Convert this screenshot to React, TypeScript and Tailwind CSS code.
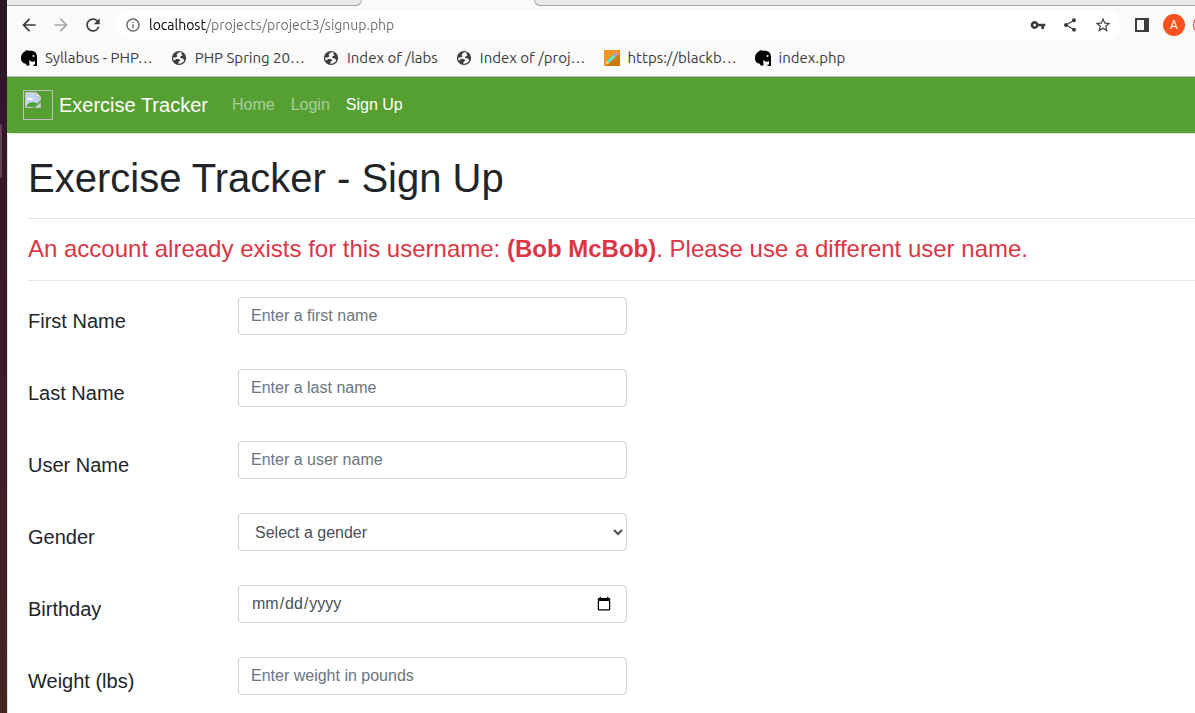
import React from "react";
import {
  MdArrowBack,
  MdArrowForward,
  MdInfoOutline,
  MdRefresh,
  MdShare,
  MdStarBorder,
  MdVpnKey,
} from "react-icons/md";

function ElephantIcon() {
  return (
    <svg viewBox="0 0 16 16" className="size-4 shrink-0" aria-hidden="true">
      <path
        d="M4 1.200C5 .3 6 0 7.200.6 8 .9 8.500.8 9.500.8 13.500.8 16 2.800 16 6.800V16h-3.500v-1.500H14V11c-1 1.200-3.800 1.200-5-.8l-.8.300L8.500 15.500H5.500L5 13.800C1.500 13.500 0 11 0 8 0 4.800 1.500 2.500 4 1.200Z"
        fill="#000"
      />
      <circle cx="12.500" cy="6" r="1" fill="#fafafa" />
    </svg>
  );
}

function PencilIcon() {
  return (
    <svg viewBox="0 0 16 16" className="size-4 shrink-0" aria-hidden="true">
      <rect width="16" height="16" fill="#f7941d" />
      <path d="M16 4v12H2Z" fill="#cc7a08" />
      <path d="M1.500 14 3 10.500 5.500 13Z" fill="#ffe0a3" />
      <path d="M3 10.500 9.500 4 12 6.500 5.500 13Z" fill="#4fcfc0" />
      <path d="M4.300 11.700 10.700 5.300" stroke="#b8f2df" strokeWidth="1" />
      <path d="m9.500 4 1.500-1.500q1.200-.8 2.200.200t.300 2.300L12 6.500Z" fill="#c38ad1" />
    </svg>
  );
}

function GlobeIcon() {
  return (
    <svg viewBox="0 0 16 16" className="size-4 shrink-0" aria-hidden="true">
      <circle cx="8" cy="8" r="7.100" fill="#3c3c3c" />
      <path
        d="M7.500 2.500 5.500 4.800 6.500 6.200 4.500 7.500H2.300C2 8.500 2.300 9.700 3 10.800L5.500 8.800 8.300 9.300 9.300 10.800 7.500 11.800 7.300 13.800C10 14 12.500 12.500 13.300 10.300L11.800 8.500 8.800 7.800 9.800 6.200 11.500 5.200 10.300 3.800 11 2.800C10 2.300 8.800 2.200 7.500 2.500Z"
        fill="#fafafa"
      />
    </svg>
  );
}

const bookmarks = [
  { label: "Syllabus - PHP…", Icon: ElephantIcon },
  { label: "PHP Spring 20…", Icon: GlobeIcon },
  { label: "Index of /labs", Icon: GlobeIcon },
  { label: "Index of /proj…", Icon: GlobeIcon },
  { label: "https://blackb…", Icon: PencilIcon },
  { label: "index.php", Icon: ElephantIcon },
];

function TabStrip() {
  return (
    <div className="flex h-[6px] bg-[#fafafa]">
      <div className="w-[355px] rounded-br-md border-r border-b border-[#ababab] bg-[#e9e9e9]" />
      <div className="w-[172px]" />
      <div className="flex-1 rounded-bl-md border-b border-l border-[#ababab] bg-[#e9e9e9]" />
    </div>
  );
}

function Toolbar() {
  return (
    <div className="flex items-center overflow-hidden py-1 pl-3 text-[#3c3c3c]">
      <button aria-label="Back" className="mr-3 shrink-0">
        <MdArrowBack className="size-5" />
      </button>
      <button aria-label="Forward" className="mr-3 shrink-0 text-[#a6a6a6]">
        <MdArrowForward className="size-5" />
      </button>
      <button aria-label="Reload" className="mr-3 shrink-0">
        <MdRefresh className="size-5" />
      </button>
      <div className="flex h-[30px] min-w-0 flex-1 items-center rounded-full bg-white pr-2 pl-2.5">
        <button aria-label="Site information" className="mr-2 shrink-0 text-[#5f6368]">
          <MdInfoOutline className="size-4" />
        </button>
        <input
          aria-label="Address"
          defaultValue="localhost/projects/project3/signup.php"
          className="min-w-0 flex-1 bg-[linear-gradient(90deg,#000_58px,#6b6b6b_58px)] bg-clip-text text-sm text-transparent outline-none"
        />
        <div className="flex shrink-0 items-center gap-4">
          <button aria-label="Saved passwords">
            <MdVpnKey className="size-4" />
          </button>
          <button aria-label="Share">
            <MdShare className="size-4" />
          </button>
          <button aria-label="Bookmark this page">
            <MdStarBorder className="size-[18px]" />
          </button>
        </div>
      </div>
      <button aria-label="Side panel" className="ml-[15px] shrink-0">
        <svg viewBox="0 0 14 14" className="size-3.5">
          <path d="M0 0h14v14H0ZM2 2v10h7V2Z" fill="currentColor" fillRule="evenodd" />
        </svg>
      </button>
      <button
        aria-label="Profile"
        className="ml-3.5 flex size-[22px] shrink-0 items-center justify-center rounded-full bg-[#f9521e] font-['Roboto',sans-serif] text-xs text-white"
      >
        A
      </button>
      <div className="ml-2 w-[2px] shrink-0 overflow-hidden">
        <div className="size-[22px] rounded-full border border-[#d93025]" />
      </div>
    </div>
  );
}

function Bookmarks() {
  return (
    <nav
      aria-label="Bookmarks"
      className="flex h-[33px] items-center gap-[18px] border-b border-[#b9b9b9] pb-1 pl-3.5"
    >
      {bookmarks.map(({ label, Icon }) => (
        <a
          key={label}
          href="#"
          className="flex shrink-0 items-center gap-2 text-[15px] leading-5 whitespace-nowrap text-[#3c3c3c]"
        >
          <Icon />
          {label}
        </a>
      ))}
    </nav>
  );
}

function SiteNav() {
  return (
    <nav aria-label="Main" className="flex h-14 shrink-0 items-center bg-[#569f33] px-4">
      <a href="#" className="mr-4 flex items-center gap-1.5 text-xl text-white">
        <svg viewBox="0 0 30 30" className="size-[30px]" aria-hidden="true">
          <rect x=".5" y=".5" width="29" height="29" fill="none" stroke="#c0c0c0" />
          <path d="M2.500 2.500h10.500l4.500 4.500v3l-8 7.500h-7Z" fill="#c3d4f5" stroke="#c4c4c4" />
          <path d="M4 9.500c0-2 2.500-2.500 3-1 1.500-1 3 0 3 1.500Z" fill="#fff" />
          <path d="M3 16.500c2-4 5-5 9-4l2 1-4 3.500Z" fill="#4f9f35" />
          <path d="M17.500 13v4.500h-5Z" fill="#c3d4f5" stroke="#c4c4c4" />
          <path d="M13 2.500v4.500h4.500Z" fill="#fff" stroke="#b5b5b5" />
        </svg>
        Exercise Tracker
      </a>
      <div className="flex text-base text-white/50">
        <a href="#" className="px-2">Home</a>
        <a href="#" className="px-2">Login</a>
        <a href="#" aria-current="page" className="px-2 text-white">Sign Up</a>
      </div>
    </nav>
  );
}

const control =
  "block h-[38px] w-full rounded border border-[#ced4da] bg-white px-3 py-1.5 text-base text-[#495057] placeholder:text-[#6c757d]";

function Field({ id, label, children }: { id: string; label: string; children: React.ReactNode }) {
  return (
    <div className="grid grid-cols-[210px_minmax(0,389px)]">
      <label htmlFor={id} className="pt-3 text-xl leading-6">
        {label}
      </label>
      {children}
    </div>
  );
}

function SignUpForm() {
  return (
    <form className="flex flex-col gap-[34px]">
      <Field id="first" label="First Name">
        <input id="first" placeholder="Enter a first name" className={control} />
      </Field>
      <Field id="last" label="Last Name">
        <input id="last" placeholder="Enter a last name" className={control} />
      </Field>
      <Field id="user" label="User Name">
        <input id="user" placeholder="Enter a user name" className={control} />
      </Field>
      <Field id="gender" label="Gender">
        <select
          id="gender"
          className="block h-[38px] w-full rounded border border-[#ced4da] bg-white py-1.5 pl-3 text-base text-[#495057]"
        >
          <option>Select a gender</option>
          <option>Female</option>
          <option>Male</option>
        </select>
      </Field>
      <Field id="birthday" label="Birthday">
        <input id="birthday" type="date" className={control} />
      </Field>
      <Field id="weight" label="Weight (lbs)">
        <input id="weight" placeholder="Enter weight in pounds" className={control} />
      </Field>
    </form>
  );
}

export default function App() {
  return (
    <div className="flex h-screen overflow-hidden bg-white">
      <div className="w-[7px] shrink-0 bg-linear-to-b from-[#2c1529] via-[#41182b] to-[#4a2420] pt-[124px]">
        <div className="h-[54px] w-[2px] rounded-r-sm bg-[#604452]" />
      </div>
      <div className="flex min-w-0 flex-1 flex-col">
        <header className="bg-[#fafafa] font-['Ubuntu','Noto_Sans',sans-serif]">
          <TabStrip />
          <Toolbar />
          <Bookmarks />
        </header>
        <div className="flex min-h-0 flex-1 flex-col font-['Liberation_Sans',Arial,sans-serif] text-[#212529]">
          <SiteNav />
          <main className="min-h-0 flex-1 overflow-hidden rounded-tl border-t border-l border-[#dfdfdf] pt-5 pl-5">
            <h1 className="text-[40px] leading-[48px]">Exercise Tracker - Sign Up</h1>
            <hr className="my-4 border-[#e5e5e5]" />
            <p className="pb-px text-2xl leading-7 text-[#dc3545]">
              An account already exists for this username: <strong>(Bob McBob)</strong>. Please use a different user
              name.
            </p>
            <hr className="my-4 border-[#e5e5e5]" />
            <SignUpForm />
          </main>
        </div>
      </div>
    </div>
  );
}
